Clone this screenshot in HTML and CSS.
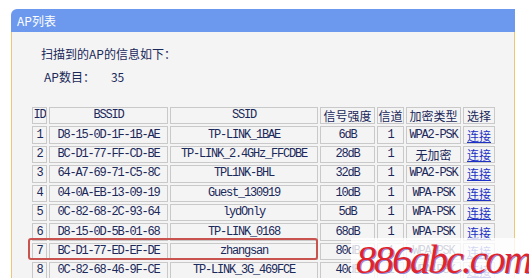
FILE: index.html
```
<!DOCTYPE html>
<html>
<head>
	<title>AP列表</title>
	<meta charset="UTF-8">
	<link rel="stylesheet" href="styles.css">
</head>
<body>
	<div class="panel">
		<div class="panel-title">AP列表</div>
		<div class="panel-body">
			<p class="intro">扫描到的AP的信息如下：</p>
			<p class="count">AP数目：<span class="count-num">35</span></p>

			<table class="ap-table">
				<tr>
					<th class="c-id">ID</th>
					<th class="c-bssid">BSSID</th>
					<th class="c-ssid">SSID</th>
					<th class="c-sig cjk">信号强度</th>
					<th class="c-ch cjk">信道</th>
					<th class="c-enc cjk">加密类型</th>
					<th class="c-sel cjk">选择</th>
				</tr>
				<tr><td>1</td><td>D8-15-0D-1F-1B-AE</td><td>TP-LINK_1BAE</td><td>6dB</td><td>1</td><td>WPA2-PSK</td><td class="cjk"><a href="#">连接</a></td></tr>
				<tr><td>2</td><td>BC-D1-77-FF-CD-BE</td><td>TP-LINK_2.4GHz_FFCDBE</td><td>28dB</td><td>1</td><td class="cjk">无加密</td><td class="cjk"><a href="#">连接</a></td></tr>
				<tr><td>3</td><td>64-A7-69-71-C5-8C</td><td>TPL1NK-BHL</td><td>32dB</td><td>1</td><td>WPA2-PSK</td><td class="cjk"><a href="#">连接</a></td></tr>
				<tr><td>4</td><td>04-0A-EB-13-09-19</td><td>Guest_130919</td><td>10dB</td><td>1</td><td>WPA-PSK</td><td class="cjk"><a href="#">连接</a></td></tr>
				<tr><td>5</td><td>0C-82-68-2C-93-64</td><td>lydOnly</td><td>5dB</td><td>1</td><td>WPA-PSK</td><td class="cjk"><a href="#">连接</a></td></tr>
				<tr><td>6</td><td>D8-15-0D-5B-01-68</td><td>TP-LINK_0168</td><td>68dB</td><td>1</td><td>WPA-PSK</td><td class="cjk"><a href="#">连接</a></td></tr>
				<tr><td>7</td><td>BC-D1-77-ED-EF-DE</td><td>zhangsan</td><td>80dB</td><td>1</td><td>WPA-PSK</td><td class="cjk"><a href="#">连接</a></td></tr>
				<tr><td>8</td><td>0C-82-68-46-9F-CE</td><td>TP-LINK_3G_469FCE</td><td>40dB</td><td>1</td><td>WPA-PSK</td><td class="cjk"><a href="#">连接</a></td></tr>
			</table>

			<div class="highlight"></div>
		</div>
	</div>

	<div class="watermark">886abc.com</div>
</body>
</html>
```
FILE: styles.css
```
body {
	margin: 0;
	height: 278px;
	background-color: #ffffff;
	font-family: "Liberation Mono", "Noto Sans CJK SC", monospace;
	color: #1a285a;
	overflow: hidden;
}

.panel {
	margin: 9px 0 0 11px;
	width: 504px;
}

.panel-title {
	height: 23px;
	line-height: 23px;
	padding-left: 6px;
	background-color: #6c99ee;
	border-top-left-radius: 6px;
	color: #ffffff;
	font-family: "Noto Sans CJK SC", sans-serif;
	font-size: 12px;
}

.panel-body {
	position: relative;
	height: 232px;
	padding: 14px 0 0 18px;
	background-color: #f4f4f4;
	border-left: 1px solid #eec774;
	border-right: 1px solid #eec774;
	overflow: hidden;
}

.intro {
	margin: 0 0 0 11px;
	line-height: 16px;
	font-family: "Noto Sans CJK SC", sans-serif;
	font-size: 12px;
}

.count {
	margin: 7px 0 0 14px;
	line-height: 16px;
	font-family: "Noto Sans CJK SC", sans-serif;
	font-size: 12px;
}

.count-num {
	margin-left: 16px;
}

.ap-table {
	margin-top: 20px;
	width: 467px;
	border-collapse: separate;
	border-spacing: 2px;
	table-layout: fixed;
}

.ap-table th,
.ap-table td {
	box-sizing: border-box;
	height: 17.4px;
	padding: 0;
	border: 1px solid #c9c9c9;
	text-align: center;
	font-size: 12px;
	font-weight: normal;
	line-height: 15px;
	letter-spacing: -1.2px;
	white-space: nowrap;
	overflow: hidden;
}

.ap-table .cjk {
	font-family: "Noto Sans CJK SC", sans-serif;
	letter-spacing: 0;
}

.c-id { width: 15px; }
.c-bssid { width: 119px; }
.c-ssid { width: 148px; }
.c-sig { width: 55px; }
.c-ch { width: 27px; }
.c-enc { width: 55px; }
.c-sel { width: 32px; }

.ap-table a {
	color: #1d31c4;
	text-decoration: underline;
}

.highlight {
	position: absolute;
	left: 16px;
	top: 206px;
	width: 290px;
	height: 22px;
	box-sizing: border-box;
	border: 2px solid #c9534f;
	border-radius: 3px;
}

.watermark {
	position: absolute;
	left: 351px;
	top: 238px;
	width: 178px;
	height: 40px;
	padding-left: 5px;
	box-sizing: border-box;
	background-color: rgba(255, 255, 255, 0.8);
	color: #e0242c;
	font-family: "Liberation Serif", serif;
	font-style: italic;
	font-size: 40px;
	line-height: 44px;
	letter-spacing: -2px;
	white-space: nowrap;
	text-shadow: 1px 1px 0 rgba(80, 60, 190, 0.6);
}
```
